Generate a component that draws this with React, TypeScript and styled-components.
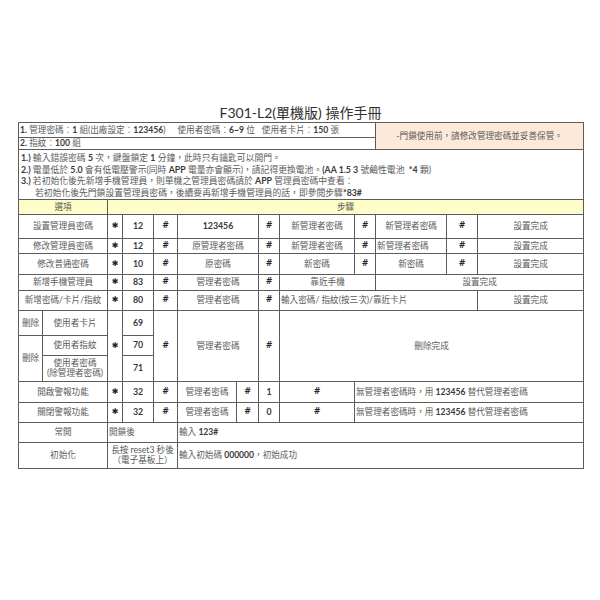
import React from "react";
import styled, { createGlobalStyle } from "styled-components";

const Global = createGlobalStyle`
  html, body {
    margin: 0;
    padding: 0;
    background: #fff;
  }
`;

const Page = styled.div`
  width: 600px;
  min-height: 600px;
  box-sizing: border-box;
  padding: 104px 0 0 18px;
  font-family: Lato, "Noto Sans CJK TC", sans-serif;
  color: #5a5a5a;
`;

const Title = styled.h1`
  width: 565px;
  margin: 0;
  font-size: 14px;
  line-height: 18px;
  font-weight: 400;
  text-align: center;
  color: #2e2e2e;
`;

const Sheet = styled.table`
  width: 565px;
  border-collapse: collapse;
  table-layout: fixed;
`;

const Row = styled.tr<{ $h: number }>`
  height: ${(p) => p.$h}px;
`;

const Cell = styled.td<{ $align?: "left" | "center"; $bg?: string; $top?: boolean }>`
  border: 1px solid #5c5c5c;
  padding: 0 1px;
  font-size: 8.6px;
  line-height: 10.4px;
  text-align: ${(p) => p.$align ?? "center"};
  vertical-align: ${(p) => (p.$top ? "top" : "middle")};
  background: ${(p) => p.$bg ?? "transparent"};
  white-space: nowrap;
  overflow: hidden;
`;

const Mark = styled(Cell)`
  font-family: "DejaVu Sans", sans-serif;
  font-weight: 700;
  font-size: 8px;
  line-height: 8px;
  color: #262626;
`;

const NumCell = styled(Cell)`
  font-family: Lato, sans-serif;
  font-weight: 700;
  font-size: 8.8px;
  color: #3a3a3a;
`;

const Num = styled.span`
  font-family: Lato, sans-serif;
  font-weight: 700;
  color: #3a3a3a;
`;

const Gap = styled.span<{ $w: number }>`
  display: inline-block;
  width: ${(p) => p.$w}px;
`;

const Notes = styled.div`
  padding: 2px 1px 0;
  font-size: 8.8px;
  line-height: 11.7px;
`;

const NoteLine = styled.div<{ $indent?: boolean }>`
  padding-left: ${(p) => (p.$indent ? 14 : 0)}px;
`;

const cols = [24, 65, 15, 31, 24, 59, 22, 21, 75, 21, 71, 31, 106];

const done = "設置完成";
const star = "✱";

export default function App() {
  return (
    <>
      <Global />
      <Page>
        <Title>F301-L2(單機版) 操作手冊</Title>
        <Sheet>
          <colgroup>
            {cols.map((w, i) => (
              <col key={i} style={{ width: w }} />
            ))}
          </colgroup>
          <tbody>
            <Row $h={15}>
              <Cell colSpan={10} $align="left">
                <Num>1.</Num> 管理密碼：<Num>1</Num> 組(出廠設定：<Num>123456</Num>)
                <Gap $w={12} />
                使用者密碼：<Num>6~9</Num> 位<Gap $w={7} />使用者卡片：<Num>150</Num> 張
              </Cell>
              <Cell colSpan={3} rowSpan={2} $bg="#fde9da">
                -門鎖使用前，請修改管理密碼並妥善保管。
              </Cell>
            </Row>
            <Row $h={12}>
              <Cell colSpan={10} $align="left">
                <Num>2.</Num> 指紋：<Num>100</Num> 組
              </Cell>
            </Row>
            <Row $h={49}>
              <Cell colSpan={13} $align="left" $top>
                <Notes>
                  <NoteLine>
                    <Num>1.)</Num> 輸入錯誤密碼 <Num>5</Num> 次，鍵盤鎖定 <Num>1</Num> 分鐘，此時只有鑰匙可以開門。
                  </NoteLine>
                  <NoteLine>
                    <Num>2.)</Num> 電量低於 <Num>5.0</Num> 會有低電壓警示(同時 <Num>APP</Num> 電量亦會顯示)，請記得更換電池。
                    <Num>(AA 1.5 3</Num> 號鹼性電池 <Num>&nbsp;*4</Num> 顆)
                  </NoteLine>
                  <NoteLine>
                    <Num>3.)</Num> 若初始化後先新增手機管理員，則單機之管理員密碼請於 <Num>APP</Num> 管理員密碼中查看：
                  </NoteLine>
                  <NoteLine $indent>
                    若初始化後先門鎖設置管理員密碼，後續要再新增手機管理員的話，即參閱步驟<Num>*83#</Num>
                  </NoteLine>
                </Notes>
              </Cell>
            </Row>
            <Row $h={15}>
              <Cell colSpan={2} $bg="#fefcc8">選項</Cell>
              <Cell colSpan={11} $bg="#fefcc8">步驟</Cell>
            </Row>
            <Row $h={24}>
              <Cell colSpan={2}>設置管理員密碼</Cell>
              <Mark>{star}</Mark>
              <NumCell>12</NumCell>
              <Mark>#</Mark>
              <NumCell colSpan={2}>123456</NumCell>
              <Mark>#</Mark>
              <Cell>新管理者密碼</Cell>
              <Mark>#</Mark>
              <Cell>新管理者密碼</Cell>
              <Mark>#</Mark>
              <Cell>{done}</Cell>
            </Row>
            <Row $h={15}>
              <Cell colSpan={2}>修改管理員密碼</Cell>
              <Mark>{star}</Mark>
              <NumCell>12</NumCell>
              <Mark>#</Mark>
              <Cell colSpan={2}>原管理者密碼</Cell>
              <Mark>#</Mark>
              <Cell>新管理者密碼</Cell>
              <Mark>#</Mark>
              <Cell $align="left">新管理者密碼</Cell>
              <Mark>#</Mark>
              <Cell>{done}</Cell>
            </Row>
            <Row $h={21}>
              <Cell colSpan={2}>修改普通密碼</Cell>
              <Mark>{star}</Mark>
              <NumCell>10</NumCell>
              <Mark>#</Mark>
              <Cell colSpan={2}>原密碼</Cell>
              <Mark>#</Mark>
              <Cell>新密碼</Cell>
              <Mark>#</Mark>
              <Cell>新密碼</Cell>
              <Mark>#</Mark>
              <Cell>{done}</Cell>
            </Row>
            <Row $h={16}>
              <Cell colSpan={2}>新增手機管理員</Cell>
              <Mark>{star}</Mark>
              <NumCell>83</NumCell>
              <Mark>#</Mark>
              <Cell colSpan={2}>管理者密碼</Cell>
              <Mark>#</Mark>
              <Cell colSpan={2}>靠近手機</Cell>
              <Cell colSpan={3}>{done}</Cell>
            </Row>
            <Row $h={20}>
              <Cell colSpan={2}>新增密碼/卡片/指紋</Cell>
              <Mark>{star}</Mark>
              <NumCell>80</NumCell>
              <Mark>#</Mark>
              <Cell colSpan={2}>管理者密碼</Cell>
              <Mark>#</Mark>
              <Cell colSpan={4} $align="left">輸入密碼/ 指紋(按三次)/靠近卡片</Cell>
              <Cell>{done}</Cell>
            </Row>
            <Row $h={25}>
              <Cell>刪除</Cell>
              <Cell>使用者卡片</Cell>
              <Mark rowSpan={3}>{star}</Mark>
              <NumCell>69</NumCell>
              <Mark rowSpan={3}>#</Mark>
              <Cell colSpan={2} rowSpan={3}>管理者密碼</Cell>
              <Mark rowSpan={3}>#</Mark>
              <Cell colSpan={5} rowSpan={3}>刪除完成</Cell>
            </Row>
            <Row $h={20}>
              <Cell rowSpan={2}>刪除</Cell>
              <Cell>使用者指紋</Cell>
              <NumCell>70</NumCell>
            </Row>
            <Row $h={26}>
              <Cell>
                使用者密碼
                <br />
                (除管理者密碼)
              </Cell>
              <NumCell>71</NumCell>
            </Row>
            <Row $h={21}>
              <Cell colSpan={2}>開啟警報功能</Cell>
              <Mark>{star}</Mark>
              <NumCell>32</NumCell>
              <Mark>#</Mark>
              <Cell>管理者密碼</Cell>
              <Mark>#</Mark>
              <NumCell>1</NumCell>
              <Mark>#</Mark>
              <Cell colSpan={4} $align="left">
                無管理者密碼時，用 <Num>123456</Num> 替代管理者密碼
              </Cell>
            </Row>
            <Row $h={20}>
              <Cell colSpan={2}>關閉警報功能</Cell>
              <Mark>{star}</Mark>
              <NumCell>32</NumCell>
              <Mark>#</Mark>
              <Cell>管理者密碼</Cell>
              <Mark>#</Mark>
              <NumCell>0</NumCell>
              <Mark>#</Mark>
              <Cell colSpan={4} $align="left">
                無管理者密碼時，用 <Num>123456</Num> 替代管理者密碼
              </Cell>
            </Row>
            <Row $h={20}>
              <Cell colSpan={2}>常開</Cell>
              <Cell colSpan={3} $align="left">開鎖後</Cell>
              <Cell colSpan={8} $align="left">
                輸入 <Num>123#</Num>
              </Cell>
            </Row>
            <Row $h={26}>
              <Cell colSpan={2}>初始化</Cell>
              <Cell colSpan={3}>
                長按 reset3 秒後
                <br />
                （電子基板上）
              </Cell>
              <Cell colSpan={8} $align="left">
                輸入初始碼 <Num>000000</Num>，初始成功
              </Cell>
            </Row>
          </tbody>
        </Sheet>
      </Page>
    </>
  );
}
